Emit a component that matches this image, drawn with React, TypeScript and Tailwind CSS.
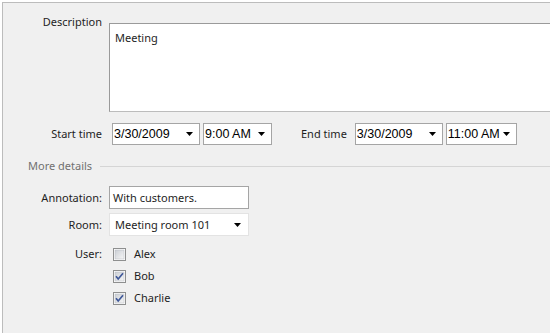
import React from 'react';

const ui = "font-['Segoe_UI','Noto_Sans','Open_Sans',sans-serif] text-[11px] leading-[16px] text-[#1e1e1e]";
const pick = "font-['Liberation_Sans',Arial,sans-serif] text-[12.5px] text-black";

function Arrow() {
  return (
    <svg width="8" height="4" viewBox="0 0 8 4" className="shrink-0">
      <path d="M0 0h7L3.5 4z" fill="#000" />
    </svg>
  );
}

function Picker({ value, width }: { value: string; width: string }) {
  return (
    <div className={`${width} h-[22px] bg-white border border-[#a5a5a5] flex items-center pl-[1px] pr-[5px]`}>
      <span className={`flex-1 whitespace-nowrap ${pick}`}>{value}</span>
      <Arrow />
    </div>
  );
}

function Check({ checked, label }: { checked: boolean; label: string }) {
  return (
    <div className="flex items-center h-[22px]">
      <svg width="13" height="13" viewBox="0 0 13 13" className="ml-[4px] shrink-0">
        <defs>
          <linearGradient id="cbg" x1="0" y1="0" x2="1" y2="1">
            <stop offset="0" stopColor="#cbcfd5" />
            <stop offset="1" stopColor="#f6f6f6" />
          </linearGradient>
        </defs>
        <rect x="0.5" y="0.5" width="12" height="12" fill="#fff" stroke="#8e8f8f" />
        <rect x="2" y="2" width="9" height="9" fill="url(#cbg)" stroke="#b4b8bf" strokeWidth="0.5" />
        {checked && <path d="M3 6.2 5.2 9 10 3.3" fill="none" stroke="#3f5899" strokeWidth="1.7" />}
      </svg>
      <span className={`ml-[8px] ${ui}`}>{label}</span>
    </div>
  );
}

export default function App() {
  return (
    <div className="w-[550px] h-[333px] bg-white pt-[2px] pl-[2px] overflow-hidden">
      <div className="h-full border-t border-l border-[#bcbcbc] bg-[#f0f0f0]">
        {/* Description */}
        <div className="flex">
          <div className={`w-[99px] shrink-0 text-right pt-[11px] ${ui}`}>Description</div>
          <div className={`ml-[7px] mt-[20px] shrink-0 w-[460px] h-[89px] bg-white border-t border-l border-[#9a9a9a] border-b border-b-[#bcbcbc] px-[5px] pt-[6px] ${ui}`}>
            Meeting
          </div>
        </div>

        {/* Times */}
        <div className="flex items-center mt-[11px]">
          <div className={`w-[99px] shrink-0 text-right ${ui}`}>Start time</div>
          <div className="ml-[10px]">
            <Picker value="3/30/2009" width="w-[88px]" />
          </div>
          <div className="ml-[3px]">
            <Picker value="9:00 AM" width="w-[69px]" />
          </div>
          <div className={`ml-[29px] ${ui}`}>End time</div>
          <div className="ml-[8px]">
            <Picker value="3/30/2009" width="w-[88px]" />
          </div>
          <div className="ml-[3px]">
            <Picker value="11:00 AM" width="w-[71px]" />
          </div>
        </div>

        {/* More details */}
        <div className="flex items-center mt-[13px] pl-[25px]">
          <span className={`${ui} text-[#707070]`}>More details</span>
          <div className="flex-1 ml-[8px] h-px bg-[#d5d5d5]" />
        </div>

        <div className="grid grid-cols-[99px_auto] gap-x-[7px] mt-[12px] items-center w-fit">
          <div className={`text-right ${ui}`}>Annotation:</div>
          <div className={`w-[140px] h-[23px] bg-white border border-[#a5a5a5] flex items-center pl-[3px] ${ui}`}>
            With customers.
          </div>

          <div className={`text-right mt-[4px] ${ui}`}>Room:</div>
          <div className="mt-[4px] w-[140px] h-[23px] bg-white border border-[#e3e3e3] flex items-center pl-[5px] pr-[6px]">
            <span className={`flex-1 ${ui}`}>Meeting room 101</span>
            <Arrow />
          </div>

          <div className={`text-right self-start mt-[7px] pt-[3px] ${ui}`}>User:</div>
          <div className="mt-[7px] flex flex-col">
            <Check checked={false} label="Alex" />
            <Check checked label="Bob" />
            <Check checked label="Charlie" />
          </div>
        </div>
      </div>
    </div>
  );
}
